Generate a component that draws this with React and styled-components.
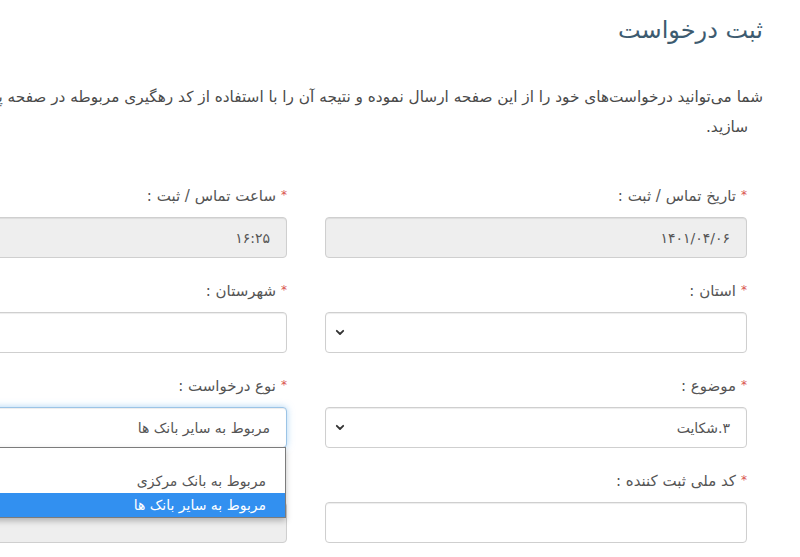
import React from "react";
import styled, { createGlobalStyle, css } from "styled-components";

const GlobalStyle = createGlobalStyle`
  html, body {
    margin: 0;
    padding: 0;
    background: #ffffff;
  }
  body {
    overflow: hidden;
    font-family: "DejaVu Sans", "Noto Sans", sans-serif;
  }
  * { box-sizing: border-box; }
`;

const Page = styled.div`
  width: 800px;
  height: 557px;
  overflow: hidden;
  direction: rtl;
  background: #fff;
`;

const Container = styled.div`
  width: 1100px;
  margin-right: 37px;
  margin-left: -337px;
`;

const Title = styled.h2`
  margin: 0;
  height: 60px;
  line-height: 60px;
  font-size: 24px;
  font-weight: normal;
  color: #3d5b70;
`;

const Intro = styled.p`
  margin: 22px 0 0;
  font-size: 15.3px;
  line-height: 30px;
  color: #4a4a4a;
`;

const IntroLine = styled.span`
  display: block;
  white-space: nowrap;
  padding-right: ${(p) => (p.$indent ? "15px" : "0")};
`;

const FormGrid = styled.div`
  display: grid;
  grid-template-columns: 422px 422px;
  column-gap: 38px;
  row-gap: 21px;
  justify-content: start;
  padding-right: 16px;
  margin-top: 42px;
`;

const Field = styled.div`
  display: flex;
  flex-direction: column;
  justify-content: flex-end;
  position: relative;
`;

const Label = styled.label`
  height: 22px;
  line-height: 22px;
  margin-bottom: 11px;
  font-size: 15px;
  color: #555;
  white-space: nowrap;
`;

const Req = styled.span`
  color: #d9534f;
  font-size: 12px;
  vertical-align: 2px;
  margin-left: 5px;
`;

const Control = styled.div`
  height: 41px;
  flex: none;
  display: flex;
  align-items: center;
  padding: 0 16px 0 9px;
  border: 1px solid #cfcfcf;
  border-radius: 4px;
  background: ${(p) => (p.$disabled ? "#eeeeee" : "#ffffff")};
  box-shadow: inset 0 1px 1px rgba(0, 0, 0, 0.075);
  font-size: 14px;
  color: #555;
  position: relative;
  ${(p) =>
    p.$focus &&
    css`
      border-color: #9cc4e6;
      box-shadow: inset 0 1px 1px rgba(0, 0, 0, 0.075),
        0 0 7px rgba(102, 175, 233, 0.55);
    `}
`;

const Value = styled.span`
  white-space: nowrap;
`;

const Chevron = styled.svg`
  margin-right: auto;
  width: 10px;
  height: 7px;
  flex: none;
`;

const Dropdown = styled.div`
  position: absolute;
  top: 100%;
  left: 0;
  right: 0;
  background: #fff;
  border: 1px solid #7c7c7c;
  box-shadow: 0 3px 6px rgba(0, 0, 0, 0.25);
  z-index: 10;
`;

const Option = styled.div`
  height: ${(p) => (p.$empty ? "21px" : "24px")};
  line-height: 24px;
  padding-right: 19px;
  font-size: 14px;
  white-space: nowrap;
  color: ${(p) => (p.$selected ? "#ffffff" : "#555")};
  background: ${(p) => (p.$selected ? "#3290f0" : "transparent")};
`;

const ChevronIcon = () => (
  <Chevron viewBox="0 0 10 7">
    <path d="M1.8 1.8 L5 5 L8.2 1.8" fill="none" stroke="#333" strokeWidth="1.8" strokeLinecap="round" strokeLinejoin="round" />
  </Chevron>
);

const FormField = ({ label, value, disabled, select, focus, children }) => (
  <Field>
    <Label>
      <Req>*</Req>
      {label}
    </Label>
    <Control $disabled={disabled} $focus={focus}>
      {value && <Value>{value}</Value>}
      {select && <ChevronIcon />}
      {children}
    </Control>
  </Field>
);

export default function App() {
  return (
    <>
      <GlobalStyle />
      <Page>
        <Container>
          <Title>ثبت درخواست</Title>
          <Intro>
            <IntroLine>
              شما می‌توانید درخواست‌های خود را از این صفحه ارسال نموده و نتیجه آن را با استفاده از کد رهگیری مربوطه در صفحه پیگیری درخواست مشخص
            </IntroLine>
            <IntroLine $indent>سازید.</IntroLine>
          </Intro>
          <FormGrid>
            <FormField label="تاریخ تماس / ثبت :" value="۱۴۰۱/۰۴/۰۶" disabled />
            <FormField label="ساعت تماس / ثبت :" value="۱۶:۲۵" disabled />
            <FormField label="استان :" select />
            <FormField label="شهرستان :" select />
            <FormField label="موضوع :" value="۳.شکایت" select />
            <FormField label="نوع درخواست :" value="مربوط به سایر بانک ها" select focus>
              <Dropdown>
                <Option $empty />
                <Option>مربوط به بانک مرکزی</Option>
                <Option $selected>مربوط به سایر بانک ها</Option>
              </Dropdown>
            </FormField>
            <FormField label="کد ملی ثبت کننده :" />
            <Field>
              <Control $disabled />
            </Field>
          </FormGrid>
        </Container>
      </Page>
    </>
  );
}
